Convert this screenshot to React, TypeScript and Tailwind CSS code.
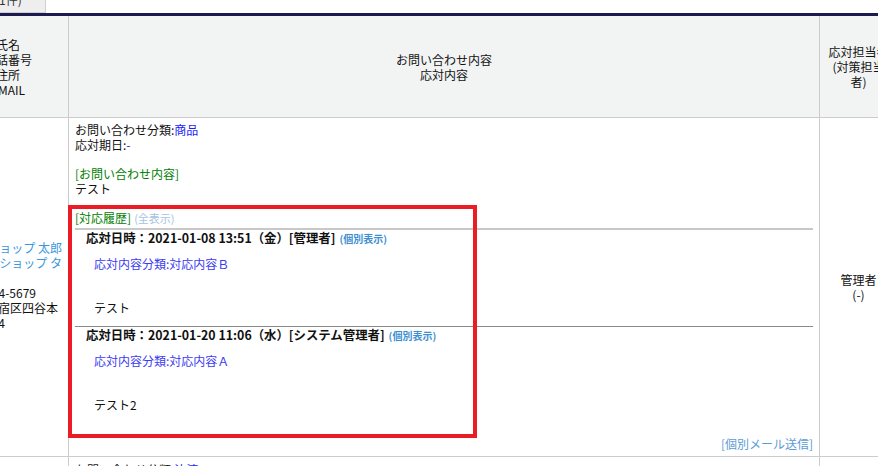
import React from "react";

const font = { fontFamily: '"Noto Sans CJK JP", "Noto Sans", sans-serif' };

function Entry({ first, date, day, who, kind, body }: { first: boolean; date: string; day: string; who: string; kind: string; body: string }) {
  return (
    <div>
      {first ? (
        <div className="mt-[2px] h-[2px] bg-[#c8c8c8]" />
      ) : (
        <div className="mt-[11px] h-px bg-[#8a8a8a]" />
      )}
      <div className="pl-[11px] leading-[15px] whitespace-nowrap">
        <span className="font-bold text-[12.4px] text-[#111]">
          応対日時：{date}（{day}）[{who}]
        </span>
        <span className="ml-[4px] text-[10px] font-bold text-[#3d8fd0]">(個別表示)</span>
      </div>
      <div className="mt-[10px] pl-[19px] leading-[15px] text-[#3b3bf0]">応対内容分類:{kind}</div>
      <div className="mt-[29px] pl-[19px] leading-[15px] text-[#111]">{body}</div>
    </div>
  );
}

function RLine({ text, mr, color }: { text: string; mr: string; color?: string }) {
  return (
    <div className={`flex justify-end ${mr}`}>
      <span className={`shrink-0 whitespace-nowrap ${color ?? ""}`}>{text}</span>
    </div>
  );
}

export default function App() {
  return (
    <div className="relative w-[878px] h-[466px] overflow-hidden bg-white text-[12px] text-[#111]" style={font}>
      {/* top tab strip */}
      <div className="flex h-[13px]">
        <div className="w-[46px] h-[13px] bg-[#eeeeee] border-r border-b border-[#cfcfcf] overflow-hidden">
          <div className="-ml-[5px] -mt-[8px] leading-[15px] whitespace-nowrap text-[#333]">(1件)</div>
        </div>
      </div>
      <div className="h-[3px] bg-[#1b1b50]" />

      {/* table */}
      <div className="-ml-[52px] w-[1000px]">
        {/* header */}
        <div className="flex h-[102px] bg-[#f2f4f4] border-b border-[#cccccc]">
          <div className="w-[120px] flex items-center justify-center text-center leading-[15px]">
            <div>
              <div>氏名</div>
              <div>電話番号</div>
              <div>住所</div>
              <div>EMAIL</div>
            </div>
          </div>
          <div className="w-[751px] border-l border-[#cccccc] flex items-center justify-center text-center leading-[15px]">
            <div>
              <div>お問い合わせ内容</div>
              <div>応対内容</div>
            </div>
          </div>
          <div className="w-[78px] border-l border-[#cccccc] flex items-center justify-center text-center leading-[15px] whitespace-nowrap">
            <div>
              <div>応対担当者</div>
              <div>(対策担当</div>
              <div>者)</div>
            </div>
          </div>
        </div>

        {/* row 1 */}
        <div className="flex h-[339px] border-b border-[#cccccc]">
          <div className="w-[120px] pt-[122px] pr-[6px] leading-[15px]">
            <RLine text="テストショップ 太郎" mr="mr-0" color="text-[#3b97de]" />
            <RLine text="テスト ショップ タ" mr="mr-0" color="text-[#3b97de]" />
            <div className="h-[15px]" />
            <RLine text="03-1234-5679" mr="mr-[26px]" />
            <RLine text="東京都新宿区四谷本" mr="mr-[4px]" />
            <RLine text="塩町1丁目 4" mr="mr-[57px]" />
          </div>
          <div className="w-[751px] border-l border-[#cccccc] pt-[5px] pl-[6px] pr-[6px]">
            <div className="leading-[14.67px]">
              <div>
                お問い合わせ分類:<span className="text-[#1a1aff]">商品</span>
              </div>
              <div>
                応対期日:<span className="text-[#1a1aff]">-</span>
              </div>
              <div className="h-[14.67px]" />
              <div className="text-[#008000]">[お問い合わせ内容]</div>
              <div>テスト</div>
              <div className="h-[14.67px]" />
              <div>
                <span className="text-[#008000]">[対応履歴]</span>
                <span className="ml-[3px] text-[11px] text-[#a6c3e0]">(全表示)</span>
              </div>
            </div>
            <Entry first={true} date="2021-01-08 13:51" day="金" who="管理者" kind="対応内容Ｂ" body="テスト" />
            <Entry first={false} date="2021-01-20 11:06" day="水" who="システム管理者" kind="対応内容Ａ" body="テスト2" />
            <div className="mt-[24px] leading-[15px] text-right text-[#5b9bd5]">[個別メール送信]</div>
          </div>
          <div className="w-[78px] border-l border-[#cccccc] flex items-center justify-center text-center leading-[15px] whitespace-nowrap">
            <div>
              <div>管理者</div>
              <div>(-)</div>
            </div>
          </div>
        </div>

        {/* row 2 */}
        <div className="flex h-[40px]">
          <div className="w-[120px]" />
          <div className="w-[751px] border-l border-[#cccccc] pt-[5px] pl-[6px] leading-[15px]">
            お問い合わせ分類:<span className="text-[#1a1aff]">決済</span>
          </div>
          <div className="w-[78px] border-l border-[#cccccc]" />
        </div>
      </div>

      {/* red highlight overlay */}
      <div className="absolute left-[68px] top-[205px] w-[409px] h-[233px] border-[4px] border-[#ec1c24]" />
    </div>
  );
}
